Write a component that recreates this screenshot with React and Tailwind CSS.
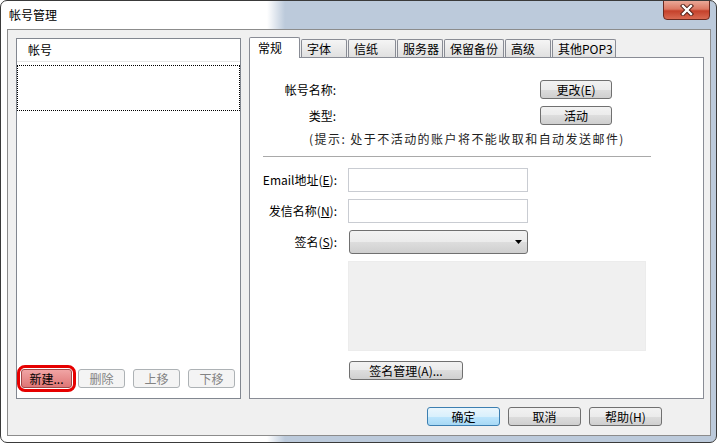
import React from "react"

const btn =
  "h-[19px] border border-[#707070] rounded-[3px] bg-[linear-gradient(#f2f2f2_0%,#ebebeb_50%,#dddddd_50%,#cfcfcf_100%)] text-[12px] leading-[17px] text-black text-center"
const btnOff =
  "h-[19px] border border-[#adb2b5] rounded-[3px] bg-[#f4f4f4] text-[12px] leading-[17px] text-[#838383] text-center"
const input = "h-[24px] border border-[#c9ccd2] bg-white"

function Tab({ label, w, active }) {
  if (active) {
    return (
      <div className={`relative z-10 -mb-[1px] h-[21px] ${w} border border-b-0 border-[#898c95] bg-white pl-[8px] leading-[19px] rounded-t-[2px]`}>
        {label}
      </div>
    )
  }
  return (
    <div className={`h-[18px] ${w} ml-[1px] border border-b-0 border-[#898c95] bg-[linear-gradient(#f5f5f5,#e0e0e0)] pl-[5px] leading-[18px] rounded-t-[2px]`}>
      {label}
    </div>
  )
}

export default function App() {
  return (
    <div className="w-[717px] h-[443px] border border-[#3a3a3a] rounded-[7px] overflow-hidden bg-[linear-gradient(90deg,#ffffff_266px,#bccadb_284px)] flex flex-col font-['Noto_Sans_CJK_SC','Liberation_Sans',sans-serif] text-[12px] text-black">
      {/* title bar */}
      <div className="h-[28px] flex items-start shrink-0">
        <span className="ml-[8px] leading-[28px]">帐号管理</span>
        <div className="ml-auto mr-[6px] -mt-[1px] w-[47px] h-[20px] border border-[#6b2a20] rounded-b-[4px] bg-[linear-gradient(#eaa897_0%,#dc7863_45%,#c5412b_55%,#d96a52_100%)] flex items-center justify-center">
          <svg width="14" height="12" viewBox="0 0 14 12">
            <path d="M3 2 L11 10 M11 2 L3 10" stroke="#4a1a12" strokeWidth="4.2" strokeLinecap="square" />
            <path d="M3 2 L11 10 M11 2 L3 10" stroke="#ffffff" strokeWidth="2.4" strokeLinecap="square" />
          </svg>
        </div>
      </div>

      {/* client area */}
      <div className="ml-[6px] w-[704px] h-[407px] border border-[#8c8c8c] bg-[#f0f0f0] pt-[8px] pl-[8px] pr-[6px] flex flex-col">
        <div className="flex gap-[8px] h-[361px]">
          {/* account list */}
          <div className="w-[225px] h-[361px] border border-[#828790] bg-white flex flex-col">
            <div className="h-[23px] border-b border-[#e5e5e5] pl-[11px] leading-[22px]">帐号</div>
            <div className="mt-[3px] h-[46px] border border-dotted border-black" />
            <div className="flex-1" />
            <div className="mb-[6px] flex items-center">
              <div className="border-[3px] border-[#e60000] rounded-[8px] p-[1px]">
                <div className="w-[51px] h-[19px] border border-[#a04848] rounded-[3px] bg-[linear-gradient(#f0a4a4,#df7676)] leading-[17px] text-center">
                  新建...
                </div>
              </div>
              <div className={`${btnOff} w-[47px] ml-[2px]`}>删除</div>
              <div className={`${btnOff} w-[47px] ml-[8px]`}>上移</div>
              <div className={`${btnOff} w-[47px] ml-[8px]`}>下移</div>
            </div>
          </div>

          {/* tabs */}
          <div className="w-[455px] flex flex-col">
            <div className="h-[19px] flex items-end">
              <Tab label="常规" w="w-[51px]" active />
              <Tab label="字体" w="w-[46px]" />
              <Tab label="信纸" w="w-[48px]" />
              <Tab label="服务器" w="w-[46px]" />
              <Tab label="保留备份" w="w-[60px]" />
              <Tab label="高级" w="w-[46px]" />
              <Tab label="其他POP3" w="w-[64px]" />
            </div>
            <div className="flex-1 border border-[#898c95] bg-white pt-[22px] flex flex-col">
              <div className="h-[19px] flex items-center">
                <span className="w-[86px] text-right">帐号名称:</span>
                <div className={`${btn} w-[72px] ml-[204px]`}>更改(E)</div>
              </div>
              <div className="mt-[7px] h-[19px] flex items-center">
                <span className="w-[86px] text-right">类型:</span>
                <div className={`${btn} w-[72px] ml-[204px]`}>活动</div>
              </div>
              <div className="mt-[6px] h-[16px] leading-[16px] ml-[59px] tracking-[1.45px] text-[#1e1e1e]">
                (提示: 处于不活动的账户将不能收取和自动发送邮件)
              </div>
              <div className="mt-[9px] ml-[13px] w-[388px] border-t border-[#a9a9a9]" />
              <div className="mt-[11px] h-[24px] flex items-center">
                <span className="w-[87px] text-right">
                  Email地址(<span className="underline">E</span>):
                </span>
                <div className={`${input} ml-[11px] w-[180px]`} />
              </div>
              <div className="mt-[7px] h-[24px] flex items-center">
                <span className="w-[87px] text-right">
                  发信名称(<span className="underline">N</span>):
                </span>
                <div className={`${input} ml-[11px] w-[180px]`} />
              </div>
              <div className="mt-[7px] h-[24px] flex items-center">
                <span className="w-[87px] text-right">
                  签名(<span className="underline">S</span>):
                </span>
                <div className="ml-[12px] w-[179px] h-[24px] border border-[#707070] rounded-[3px] bg-[linear-gradient(#f2f2f2_0%,#ebebeb_50%,#dddddd_50%,#cfcfcf_100%)] flex items-center justify-end pr-[5px]">
                  <svg width="7" height="4" viewBox="0 0 7 4">
                    <path d="M0 0 H7 L3.5 4 Z" fill="#000" />
                  </svg>
                </div>
              </div>
              <div className="mt-[7px] ml-[98px] w-[298px] h-[90px] bg-[#f0f0f0] border border-[#ececec]" />
              <div className={`${btn} mt-[10px] ml-[99px] w-[114px]`}>签名管理(A)...</div>
            </div>
          </div>
        </div>

        {/* dialog buttons */}
        <div className="mt-[8px] flex justify-end gap-[8px] pr-[42px]">
          <div className="w-[73px] h-[19px] border border-[#3c7fb1] rounded-[3px] bg-[linear-gradient(#eaf6fd_0%,#d9f0fc_50%,#bee6fd_50%,#a7d9f5_100%)] leading-[17px] text-center">
            确定
          </div>
          <div className={`${btn} w-[73px]`}>取消</div>
          <div className={`${btn} w-[73px]`}>帮助(H)</div>
        </div>
      </div>
    </div>
  )
}
